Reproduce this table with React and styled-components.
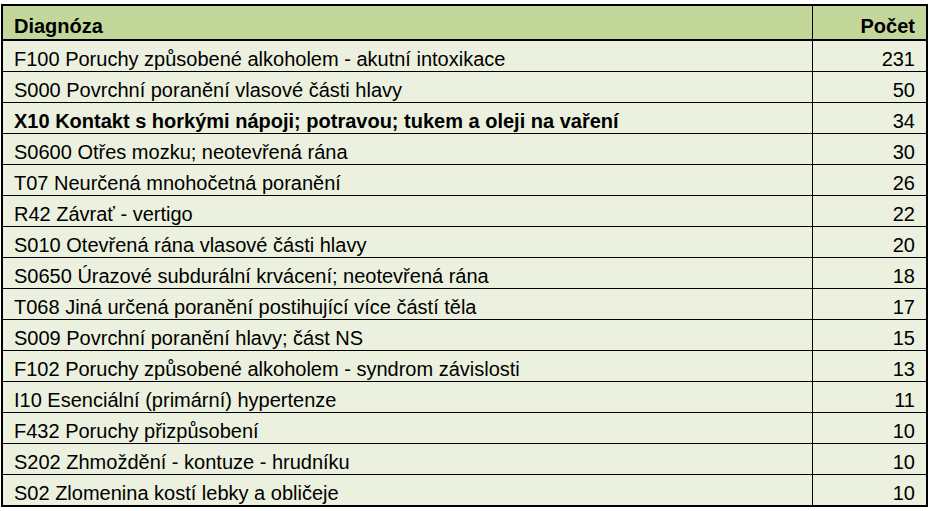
import React from "react";
import styled, { createGlobalStyle } from "styled-components";

const Global = createGlobalStyle`
  html, body { margin: 0; padding: 0; background: #ffffff; }
  body { font-family: "Liberation Sans", Arial, Helvetica, sans-serif; }
`;

const Page = styled.div`
  padding: 4px 0 0 1px;
`;

const Table = styled.table`
  width: 927px;
  border-collapse: collapse;
  table-layout: fixed;
  border: 2px solid #000;
  font-size: 20px;
  color: #000;
`;

const HeadCell = styled.th`
  background: #c4d79b;
  padding: 7px 11px 0 11px;
  font-weight: bold;
  text-align: ${(p) => p.$align || "left"};
  border-left: 1px solid #000;
  border-bottom: 2px solid #000;
  line-height: 26px;
  white-space: nowrap;
`;

const Row = styled.tr`
  background: #ebf1de;
`;

const Cell = styled.td`
  padding: 6px 11px 0 11px;
  font-weight: ${(p) => (p.$bold ? "bold" : "normal")};
  text-align: ${(p) => p.$align || "left"};
  border-left: 1px solid #000;
  border-top: 1px solid #000;
  line-height: 24px;
  white-space: nowrap;
  overflow: hidden;
`;

const rows = [
  ["F100 Poruchy způsobené alkoholem - akutní intoxikace", 231],
  ["S000 Povrchní poranění vlasové části hlavy", 50],
  ["X10 Kontakt s horkými nápoji; potravou; tukem a oleji na vaření", 34, true],
  ["S0600 Otřes mozku; neotevřená rána", 30],
  ["T07 Neurčená mnohočetná poranění", 26],
  ["R42 Závrať - vertigo", 22],
  ["S010 Otevřená rána vlasové části hlavy", 20],
  ["S0650 Úrazové subdurální krvácení; neotevřená rána", 18],
  ["T068 Jiná určená poranění postihující více částí těla", 17],
  ["S009 Povrchní poranění hlavy; část NS", 15],
  ["F102 Poruchy způsobené alkoholem - syndrom závislosti", 13],
  ["I10 Esenciální (primární) hypertenze", 11],
  ["F432 Poruchy přizpůsobení", 10],
  ["S202 Zhmoždění - kontuze - hrudníku", 10],
  ["S02 Zlomenina kostí lebky a obličeje", 10],
];

export default function App() {
  return (
    <Page>
      <Global />
      <Table>
        <colgroup>
          <col />
          <col style={{ width: "115px" }} />
        </colgroup>
        <thead>
          <tr>
            <HeadCell>Diagnóza</HeadCell>
            <HeadCell $align="right">Počet</HeadCell>
          </tr>
        </thead>
        <tbody>
          {rows.map(([name, count, bold]) => (
            <Row key={name}>
              <Cell $bold={bold}>{name}</Cell>
              <Cell $align="right">{count}</Cell>
            </Row>
          ))}
        </tbody>
      </Table>
    </Page>
  );
}
